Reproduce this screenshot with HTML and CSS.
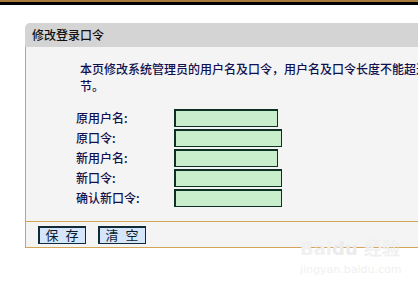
FILE: index.html
```html
<!DOCTYPE html>
<html lang="zh-CN">
<head>
    <meta charset="UTF-8">
    <title>修改登录口令</title>
    <link rel="stylesheet" href="styles.css">
</head>
<body>
    <div class="top-bar"></div>

    <div class="panel">
        <div class="panel-title">修改登录口令</div>
        <div class="panel-body">
            <p class="intro">本页修改系统管理员的用户名及口令，用户名及口令长度不能超过14个字节。</p>
            <form class="pwd-form" id="pwdForm">
                <label>原用户名:</label><input type="text" class="txt">
                <label>原口令:</label><input type="password" class="txt pwd">
                <label>新用户名:</label><input type="text" class="txt">
                <label>新口令:</label><input type="password" class="txt pwd">
                <label>确认新口令:</label><input type="password" class="txt pwd">
            </form>
        </div>
        <div class="panel-foot">
            <button class="btn" type="button">保 存</button>
            <button class="btn" type="button">清 空</button>
        </div>
    </div>

    <!-- 水印 -->
    <div class="watermark">
        <span class="wm-logo">Bai<b>du</b> 经验</span>
        <span class="wm-url">jingyan.baidu.com</span>
    </div>
</body>
</html>
```

FILE: styles.css
```css
body {
    margin: 0;
    background: #fff;
    font-family: "Noto Sans CJK SC", "DejaVu Sans", sans-serif;
    font-size: 12px;
    overflow: hidden;
    position: relative;
    height: 293px;
}
.top-bar {
    height: 3px;
    border-top: 2px solid #a8783c;
    background: #000;
}
.panel {
    margin: 18px 0 0 25px;
    width: 420px;
}
.panel-title {
    height: 24px;
    line-height: 23px;
    padding-left: 7px;
    background: #d4d4d4;
    color: #111;
    font-size: 12px;
    font-weight: 500;
    border-top-left-radius: 5px;
}
.panel-body {
    height: 174px;
    background: #f4f4f4;
    border-left: 1px solid #d4a455;
    box-sizing: border-box;
    padding-top: 13px;
}
.intro {
    margin: 0 0 0 54px;
    width: 392px;
    line-height: 17px;
    color: #10104e;
    font-weight: 500;
}
.pwd-form {
    display: grid;
    grid-template-columns: 98px auto;
    row-gap: 2px;
    margin: 15px 0 0 50px;
    justify-items: start;
    align-items: center;
}
.pwd-form label {
    color: #10104e;
    font-weight: 500;
    line-height: 18px;
}
.txt {
    width: 104px;
    height: 18px;
    box-sizing: border-box;
    margin: 0;
    padding: 0 2px;
    border: 1px solid #0c3024;
    box-shadow: inset 1px 1px 0 #0c3024;
    background: #c8eecc;
    font-size: 12px;
}
.txt.pwd {
    width: 108px;
}
.panel-foot {
    height: 21px;
    background: #f4f4f4;
    border-left: 1px solid #d4a455;
    border-top: 1px solid #d4a455;
    border-bottom: 1px solid #d4a455;
    display: flex;
    gap: 12px;
    padding: 4px 0 0 12px;
}
.btn {
    width: 48px;
    height: 18px;
    padding: 0 0 0 2px;
    margin: 0;
    background: #d6e6fa;
    border: 1px solid #102a38;
    box-shadow: inset 1px 1px 0 #102a38;
    color: #0a1a2a;
    font-family: "Noto Sans CJK SC", sans-serif;
    font-size: 13px;
    line-height: 16px;
    letter-spacing: 2px;
    cursor: pointer;
}

/* 水印 */
.watermark {
    position: absolute;
    left: 300px;
    top: 240px;
    color: #f0f0f0;
    font-family: "DejaVu Sans", sans-serif;
    line-height: 1;
}
.wm-logo {
    display: block;
    font-size: 18px;
    font-weight: bold;
}
.wm-logo b {
    color: #ebebeb;
}
.wm-url {
    display: block;
    font-size: 11px;
    margin-top: 6px;
}
```
